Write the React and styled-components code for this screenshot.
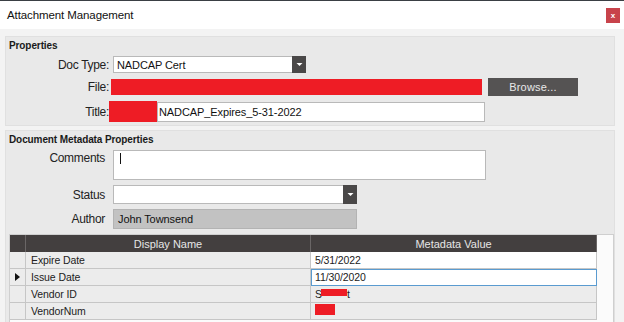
import React from 'react'
import styled, { createGlobalStyle } from 'styled-components'

const GlobalStyle = createGlobalStyle`
  html, body {
    margin: 0;
    padding: 0;
    background: #f2f2f2;
  }
  body {
    font-family: "Liberation Sans", Arial, sans-serif;
    font-size: 11px;
    color: #1a1a1a;
  }
`

const Window = styled.div`
  width: 624px;
  height: 322px;
  overflow: hidden;
  background: #f3f3f3;
  border-top: 1px solid #3a3f44;
  box-sizing: border-box;
`

const TitleBar = styled.div`
  height: 28px;
  background: #fff;
  display: flex;
  align-items: center;
  justify-content: space-between;
  padding: 0 4px 0 7px;
  font-family: "Liberation Sans", Arial, sans-serif;
  font-size: 11.5px;
  letter-spacing: -0.1px;
  color: #111;
`

const CloseButton = styled.div`
  width: 14px;
  height: 15px;
  margin-top: 1px;
  background: #c8434b;
  color: #fff;
  font-size: 8px;
  font-weight: bold;
  display: flex;
  align-items: center;
  justify-content: center;
`

const Body = styled.div`
  padding: 7px 9px 0 5px;
  display: flex;
  flex-direction: column;
  gap: 4px;
`

const Panel = styled.div`
  background: #e9e9e9;
  border: 1px solid #e0e0e0;
  padding: 2px 0 3px 3px;
`

const PanelTitle = styled.div`
  font-weight: bold;
  font-size: 10px;
  letter-spacing: -0.1px;
  height: 14px;
  line-height: 14px;
  margin-bottom: ${p => p.$gap}px;
`

const FormGrid = styled.div`
  display: grid;
  grid-template-columns: ${p => p.$label}px auto;
  column-gap: ${p => p.$colGap}px;
  row-gap: ${p => p.$rowGap}px;
  align-items: center;
`

const Label = styled.div`
  text-align: right;
  font-size: 12px;
  letter-spacing: -0.3px;
  color: #222;
  align-self: ${p => (p.$top ? 'start' : 'center')};
  padding-top: ${p => (p.$top ? 1 : 0)}px;
`

const Field = styled.div`
  box-sizing: border-box;
  width: ${p => p.$w}px;
  height: ${p => p.$h}px;
  background: ${p => p.$bg || '#fff'};
  border: 1px solid ${p => p.$border || '#b9b9b9'};
  display: flex;
  align-items: ${p => (p.$top ? 'flex-start' : 'center')};
  font-size: 11px;
  color: #111;
  position: relative;
`

const FieldText = styled.span`
  padding-left: ${p => p.$pad ?? 3}px;
  letter-spacing: -0.1px;
`

const DropButton = styled.div`
  margin-left: auto;
  width: 14px;
  height: calc(100% + 2px);
  margin-right: -1px;
  background: #4a4848;
  display: flex;
  align-items: center;
  justify-content: center;
`

const Redact = styled.span`
  display: inline-block;
  background: #ee1c25;
  width: ${p => p.$w}px;
  height: ${p => p.$h}px;
  flex-shrink: 0;
  vertical-align: middle;
`

const FileRow = styled.div`
  display: flex;
  align-items: center;
  gap: 6px;
  margin-left: -2px;
`

const BrowseButton = styled.div`
  width: 90px;
  height: 18px;
  background: #555353;
  color: #e8e8e8;
  font-size: 11px;
  display: flex;
  align-items: center;
  justify-content: center;
  letter-spacing: 0.2px;
`

const TitleField = styled.div`
  display: flex;
  align-items: center;
  margin-left: -4px;
`

const Cursor = styled.span`
  display: block;
  width: 1px;
  height: 11px;
  background: #111;
  margin: 2px 0 0 6px;
`

const Grid = styled.div`
  margin-top: 5px;
  background: #fbfbfb;
  border: 1px solid #cfcfcf;
  border-bottom: none;
  height: 100px;
`

const Table = styled.div`
  width: 587px;
  display: grid;
  grid-template-columns: 16px 285px 286px;
`

const HeadCell = styled.div`
  height: 17px;
  background: #433f3f;
  color: #e6e6e6;
  font-size: 11px;
  display: flex;
  align-items: center;
  justify-content: center;
  border-right: 1px solid #6a6666;
  &:last-child { border-right: none; }
`

const Cell = styled.div`
  box-sizing: border-box;
  height: 17px;
  background: ${p => p.$bg || '#ececec'};
  border-bottom: 1px solid #c6c6c6;
  border-right: 1px solid #c6c6c6;
  display: flex;
  align-items: center;
  padding-left: ${p => p.$pad ?? 5}px;
  font-size: 10.5px;
  letter-spacing: -0.1px;
  color: #222;
  ${p => p.$selected && `
    outline: 1px solid #5a9bd0;
    outline-offset: -1px;
  `}
`

const RowMarker = styled.span`
  width: 0;
  height: 0;
  border-top: 4px solid transparent;
  border-bottom: 4px solid transparent;
  border-left: 5px solid #111;
`

const Caret = () => (
  <svg width="7" height="5" viewBox="0 0 7 5">
    <path d="M0.5 1 L6.5 1 L3.5 4 Z" fill="#fff" />
  </svg>
)

const rows = [
  { name: 'Expire Date', value: '5/31/2022', bg: '#ffffff' },
  { name: 'Issue Date', value: '11/30/2020', bg: '#ffffff', current: true },
  { name: 'Vendor ID', value: 'vendor', bg: '#ececec' },
  { name: 'VendorNum', value: 'num', bg: '#ececec' },
]

const renderValue = (row) => {
  if (row.value === 'vendor') {
    return (
      <>
        S<Redact $w={26} $h={7} style={{ marginLeft: -1, marginTop: -4 }} />t
      </>
    )
  }
  if (row.value === 'num') {
    return <Redact $w={20} $h={11} style={{ marginTop: -4 }} />
  }
  return row.value
}

export default function App() {
  return (
    <>
      <GlobalStyle />
      <Window>
        <TitleBar>
          <span>Attachment Management</span>
          <CloseButton>x</CloseButton>
        </TitleBar>
        <Body>
          <Panel>
            <PanelTitle $gap={3}>Properties</PanelTitle>
            <FormGrid $label={100} $colGap={4} $rowGap={5}>
              <Label>Doc Type:</Label>
              <Field $w={193} $h={17}>
                <FieldText>NADCAP Cert</FieldText>
                <DropButton><Caret /></DropButton>
              </Field>

              <Label>File:</Label>
              <FileRow>
                <Redact $w={371} $h={16} />
                <BrowseButton>Browse...</BrowseButton>
              </FileRow>

              <Label>Title:</Label>
              <TitleField>
                <Redact $w={48} $h={21} style={{ zIndex: 1 }} />
                <Field $w={328} $h={20}>
                  <FieldText $pad={1}>NADCAP_Expires_5-31-2022</FieldText>
                </Field>
              </TitleField>
            </FormGrid>
          </Panel>

          <Panel>
            <PanelTitle $gap={3}>Document Metadata Properties</PanelTitle>
            <FormGrid $label={96} $colGap={8} $rowGap={5}>
              <Label $top>Comments</Label>
              <Field $w={373} $h={30} $top>
                <Cursor />
              </Field>

              <Label>Status</Label>
              <Field $w={244} $h={19}>
                <DropButton><Caret /></DropButton>
              </Field>

              <Label>Author</Label>
              <Field $w={244} $h={20} $bg="#c2c2c2" $border="#b3b3b3">
                <FieldText $pad={4}>John Townsend</FieldText>
              </Field>
            </FormGrid>

            <Grid>
              <Table>
                <HeadCell />
                <HeadCell>Display Name</HeadCell>
                <HeadCell>Metadata Value</HeadCell>
                {rows.map(row => (
                  <React.Fragment key={row.name}>
                    <Cell $pad={0} style={{ justifyContent: 'center' }}>
                      {row.current && <RowMarker />}
                    </Cell>
                    <Cell>{row.name}</Cell>
                    <Cell $bg={row.bg} $selected={row.current} $pad={4}>
                      {renderValue(row)}
                    </Cell>
                  </React.Fragment>
                ))}
              </Table>
            </Grid>
          </Panel>
        </Body>
      </Window>
    </>
  )
}
